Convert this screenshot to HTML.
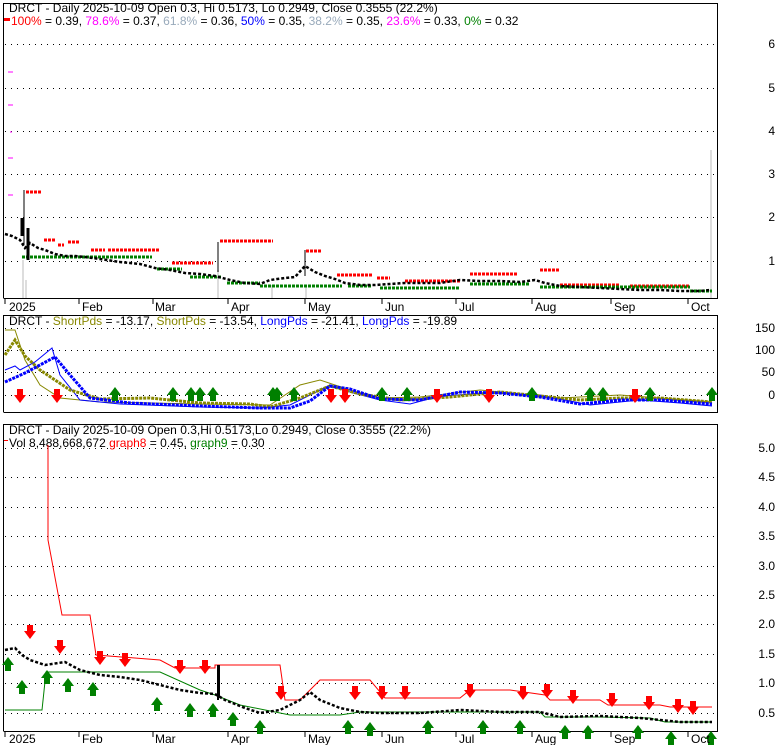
<!DOCTYPE html>
<html><head><meta charset="utf-8"><style>
body{margin:0;background:#fff;}
svg text{font-family:"Liberation Sans",sans-serif;font-size:12px;}
</style></head><body>
<svg width="780" height="745" viewBox="0 0 780 745" xmlns="http://www.w3.org/2000/svg">
<rect width="780" height="745" fill="#fff"/>
<g stroke="#000" stroke-width="1" stroke-dasharray="1 5" fill="none">
<line x1="5" y1="44.5" x2="716" y2="44.5"/><line x1="5" y1="88.5" x2="716" y2="88.5"/>
<line x1="5" y1="131.5" x2="716" y2="131.5"/><line x1="5" y1="174.5" x2="716" y2="174.5"/>
<line x1="5" y1="217.5" x2="716" y2="217.5"/><line x1="5" y1="261.5" x2="716" y2="261.5"/>
</g>
<path d="M23 298V260M26 298V280M218 298V270M272 298V285M306 298V285M711 298V150" stroke="#ddd" stroke-width="2"/>
<path d="M3.5 298V3.5H717.5V298.5H3.5" fill="none" stroke="#000"/>
<g font-size="12" text-anchor="end" fill="#000">
<text x="775" y="48">6</text><text x="775" y="92">5</text><text x="775" y="135">4</text>
<text x="775" y="178">3</text><text x="775" y="221">2</text><text x="775" y="265">1</text>
</g>
<text x="9" y="12">DRCT - Daily 2025-10-09 Open 0.3, Hi 0.5173, Lo 0.2949, Close 0.3555 (22.2%)</text>
<rect x="4" y="18" width="6" height="3" fill="red"/>
<text x="11" y="25"><tspan fill="red">100%</tspan> = 0.39, <tspan fill="#f0f">78.6%</tspan> = 0.37, <tspan fill="#9ab">61.8%</tspan> = 0.36, <tspan fill="#00f">50%</tspan> = 0.35, <tspan fill="#9ab">38.2%</tspan> = 0.35, <tspan fill="#f0f">23.6%</tspan> = 0.33, <tspan fill="green">0%</tspan> = 0.32</text>
<g stroke-width="3" stroke-dasharray="3 1" fill="none">
<path stroke="red" d="M26 192H41M44 240H55M58 245H64M68 242H80M91 250H105M108 250H160M172 263H213M220 241H273M306 251H322M337 275H372M377 278H390M405 281H460M470 274H517M540 270H560M560 285H620M630 286H690"/>
<path stroke="green" d="M22 257H152M157 269H182M190 277H222M227 283H260M260 286H342M348 286H372M380 288H460M470 284H530M540 287H690M690 291H712"/>
</g>
<polyline fill="none" stroke="#000" stroke-width="2.5" stroke-dasharray="3 2" points="5,234 12,236 20,240 25,248 30,243 38,248 45,250 55,254 65,256 75,256 85,257 100,259 120,262 140,264 155,268 170,270 185,273 200,274 215,276 230,280 245,283 260,284 270,280 285,278 295,277 305,266 315,272 325,276 335,279 345,283 360,285 375,285 390,284 405,283 420,283 440,283 460,280 480,281 500,281 520,282 535,280 545,283 560,286 580,287 600,288 620,289 640,290 660,290 680,291 700,291 710,290"/>
<path d="M24 190V245M218 242V272M305 250V276" stroke="#000" fill="none"/>
<path d="M22 218V236M28 228V260" stroke="#000" stroke-width="3"/>
<path d="M8 72H13M8 105H13M8 158H13M8 195H13M10 132H12" stroke="#f0f"/>
<g font-size="12" fill="#000">
<path d="M5 298V304M79 298V304M153 298V304M228 298V304M305 298V304M382 298V304M456 298V304M532 298V304M611 298V304M688 298V304" stroke="#000"/>
<text x="9" y="311">2025</text><text x="82" y="311">Feb</text><text x="155" y="311">Mar</text><text x="231" y="311">Apr</text><text x="308" y="311">May</text><text x="385" y="311">Jun</text><text x="459" y="311">Jul</text><text x="535" y="311">Aug</text><text x="614" y="311">Sep</text><text x="691" y="311">Oct</text>
</g>
<g stroke="#000" stroke-dasharray="1 5" fill="none">
<line x1="5" y1="328.5" x2="716" y2="328.5"/><line x1="5" y1="350.5" x2="716" y2="350.5"/>
<line x1="5" y1="372.5" x2="716" y2="372.5"/><line x1="5" y1="395.5" x2="716" y2="395.5"/>
</g>
<path d="M3.5 412V315.5H717.5V412.5H3.5" fill="none" stroke="#000"/>
<g text-anchor="end"><text x="775" y="332">150</text><text x="775" y="354">100</text><text x="775" y="376">50</text><text x="775" y="399">0</text></g>
<text x="9" y="325">DRCT - <tspan fill="#880">ShortPds</tspan> = -13.17, <tspan fill="#880">ShortPds</tspan> = -13.54, <tspan fill="#00f">LongPds</tspan> = -21.41, <tspan fill="#00f">LongPds</tspan> = -19.89</text>
<polyline fill="none" stroke="#880" points="5,330 15,330 25,360 40,385 60,398 100,402 200,404 270,405 300,385 320,380 350,390 380,398 420,397 480,390 520,394 560,398 620,395 660,398 712,402"/>
<polyline fill="none" stroke="#00f" points="5,370 15,366 20,370 35,362 52,348 60,375 80,400 120,404 200,407 260,408 290,405 310,395 330,385 350,392 380,400 410,404 440,396 490,393 540,395 590,405 640,400 680,403 712,406"/>
<polyline fill="none" stroke="#880" stroke-width="3" stroke-dasharray="3 1" points="5,355 15,340 25,356 40,370 70,390 100,399 150,398 200,403 250,404 270,407 300,398 330,386 360,394 400,400 450,397 500,392 540,396 580,400 620,398 660,398 712,402"/>
<polyline fill="none" stroke="#00f" stroke-width="3" stroke-dasharray="3 1" points="5,382 25,373 55,357 70,375 90,398 130,403 200,406 260,408 290,408 310,401 330,386 350,389 380,399 420,400 460,392 500,393 540,397 580,404 620,400 660,400 712,404"/>
<g fill="green"><path d="M0 0L-6 8H-3V14H3V8H6Z" transform="translate(115,387)"/>
<path d="M0 0L-6 8H-3V14H3V8H6Z" transform="translate(173,387)"/><path d="M0 0L-6 8H-3V14H3V8H6Z" transform="translate(191,387)"/><path d="M0 0L-6 8H-3V14H3V8H6Z" transform="translate(200,387)"/><path d="M0 0L-6 8H-3V14H3V8H6Z" transform="translate(213,387)"/><path d="M0 0L-6 8H-3V14H3V8H6Z" transform="translate(273,387)"/><path d="M0 0L-6 8H-3V14H3V8H6Z" transform="translate(277,387)"/><path d="M0 0L-6 8H-3V14H3V8H6Z" transform="translate(294,387)"/><path d="M0 0L-6 8H-3V14H3V8H6Z" transform="translate(382,387)"/><path d="M0 0L-6 8H-3V14H3V8H6Z" transform="translate(407,387)"/><path d="M0 0L-6 8H-3V14H3V8H6Z" transform="translate(532,387)"/><path d="M0 0L-6 8H-3V14H3V8H6Z" transform="translate(590,387)"/><path d="M0 0L-6 8H-3V14H3V8H6Z" transform="translate(603,387)"/><path d="M0 0L-6 8H-3V14H3V8H6Z" transform="translate(650,387)"/><path d="M0 0L-6 8H-3V14H3V8H6Z" transform="translate(712,387)"/></g>
<g fill="red"><path d="M-3 0H3V6H6L0 14L-6 6H-3Z" transform="translate(20,389)"/><path d="M-3 0H3V6H6L0 14L-6 6H-3Z" transform="translate(57,389)"/><path d="M-3 0H3V6H6L0 14L-6 6H-3Z" transform="translate(331,389)"/><path d="M-3 0H3V6H6L0 14L-6 6H-3Z" transform="translate(345,389)"/><path d="M-3 0H3V6H6L0 14L-6 6H-3Z" transform="translate(437,389)"/><path d="M-3 0H3V6H6L0 14L-6 6H-3Z" transform="translate(489,389)"/><path d="M-3 0H3V6H6L0 14L-6 6H-3Z" transform="translate(635,389)"/></g>
<g stroke="#000" stroke-dasharray="1 5" fill="none">
<line x1="5" y1="448.5" x2="716" y2="448.5"/><line x1="5" y1="477.5" x2="716" y2="477.5"/><line x1="5" y1="507.5" x2="716" y2="507.5"/><line x1="5" y1="536.5" x2="716" y2="536.5"/><line x1="5" y1="566.5" x2="716" y2="566.5"/><line x1="5" y1="595.5" x2="716" y2="595.5"/><line x1="5" y1="624.5" x2="716" y2="624.5"/><line x1="5" y1="654.5" x2="716" y2="654.5"/><line x1="5" y1="683.5" x2="716" y2="683.5"/><line x1="5" y1="713.5" x2="716" y2="713.5"/>
</g>
<path d="M3.5 731V424.5H717.5V731.5H3.5" fill="none" stroke="#000"/>
<g text-anchor="end"><text x="775" y="452">5.0</text><text x="775" y="481">4.5</text><text x="775" y="511">4.0</text><text x="775" y="540">3.5</text><text x="775" y="570">3.0</text><text x="775" y="599">2.5</text><text x="775" y="628">2.0</text><text x="775" y="658">1.5</text><text x="775" y="687">1.0</text><text x="775" y="717">0.5</text></g>
<text x="9" y="434">DRCT - Daily 2025-10-09 Open 0.3,Hi 0.5173,Lo 0.2949, Close 0.3555 (22.2%)</text>
<rect x="4" y="440" width="4" height="1" fill="red"/>
<text x="9" y="447">Vol 8,488,668,672 <tspan fill="red">graph8</tspan> = 0.45, <tspan fill="green">graph9</tspan> = 0.30</text>
<polyline fill="none" stroke="red" points="48,445 48,540 62,615 90,615 96,655 160,660 175,668 215,668 215,665 280,665 285,700 300,700 320,680 370,680 385,698 460,698 470,690 510,690 545,695 550,700 600,700 608,705 660,705 670,707 712,707"/>
<polyline fill="none" stroke="green" points="5,710 42,710 46,672 95,672 160,672 200,690 215,695 240,705 290,715 340,715 360,712 470,712 540,712 545,717 600,717 650,718 665,722 712,722"/>
<polyline fill="none" stroke="#000" stroke-width="2.5" stroke-dasharray="3 2" points="5,650 15,648 22,655 30,660 45,665 65,662 80,670 100,675 120,677 140,680 160,685 180,690 200,693 215,694 225,700 245,708 260,713 280,710 300,700 310,692 320,700 340,708 360,712 380,713 420,713 460,710 500,712 540,712 560,717 600,716 640,718 680,722 712,722"/>
<path d="M218 665V700M219 665V697" stroke="#000" stroke-width="2"/>
<g fill="green"><path d="M0 0L-6 8H-3V14H3V8H6Z" transform="translate(8,657)"/><path d="M0 0L-6 8H-3V14H3V8H6Z" transform="translate(22,680)"/><path d="M0 0L-6 8H-3V14H3V8H6Z" transform="translate(47,670)"/><path d="M0 0L-6 8H-3V14H3V8H6Z" transform="translate(68,678)"/><path d="M0 0L-6 8H-3V14H3V8H6Z" transform="translate(93,682)"/><path d="M0 0L-6 8H-3V14H3V8H6Z" transform="translate(157,697)"/><path d="M0 0L-6 8H-3V14H3V8H6Z" transform="translate(190,703)"/><path d="M0 0L-6 8H-3V14H3V8H6Z" transform="translate(213,703)"/><path d="M0 0L-6 8H-3V14H3V8H6Z" transform="translate(233,712)"/><path d="M0 0L-6 8H-3V14H3V8H6Z" transform="translate(260,720)"/><path d="M0 0L-6 8H-3V14H3V8H6Z" transform="translate(348,720)"/><path d="M0 0L-6 8H-3V14H3V8H6Z" transform="translate(370,722)"/><path d="M0 0L-6 8H-3V14H3V8H6Z" transform="translate(428,720)"/><path d="M0 0L-6 8H-3V14H3V8H6Z" transform="translate(483,720)"/><path d="M0 0L-6 8H-3V14H3V8H6Z" transform="translate(520,720)"/><path d="M0 0L-6 8H-3V14H3V8H6Z" transform="translate(565,725)"/><path d="M0 0L-6 8H-3V14H3V8H6Z" transform="translate(588,725)"/><path d="M0 0L-6 8H-3V14H3V8H6Z" transform="translate(638,725)"/><path d="M0 0L-6 8H-3V14H3V8H6Z" transform="translate(671,731)"/><path d="M0 0L-6 8H-3V14H3V8H6Z" transform="translate(711,731)"/></g>
<g fill="red"><path d="M-3 0H3V6H6L0 14L-6 6H-3Z" transform="translate(30,625)"/><path d="M-3 0H3V6H6L0 14L-6 6H-3Z" transform="translate(60,640)"/><path d="M-3 0H3V6H6L0 14L-6 6H-3Z" transform="translate(100,651)"/><path d="M-3 0H3V6H6L0 14L-6 6H-3Z" transform="translate(125,653)"/><path d="M-3 0H3V6H6L0 14L-6 6H-3Z" transform="translate(180,660)"/><path d="M-3 0H3V6H6L0 14L-6 6H-3Z" transform="translate(205,660)"/><path d="M-3 0H3V6H6L0 14L-6 6H-3Z" transform="translate(281,686)"/><path d="M-3 0H3V6H6L0 14L-6 6H-3Z" transform="translate(355,686)"/><path d="M-3 0H3V6H6L0 14L-6 6H-3Z" transform="translate(382,686)"/><path d="M-3 0H3V6H6L0 14L-6 6H-3Z" transform="translate(405,686)"/><path d="M-3 0H3V6H6L0 14L-6 6H-3Z" transform="translate(470,684)"/><path d="M-3 0H3V6H6L0 14L-6 6H-3Z" transform="translate(523,686)"/><path d="M-3 0H3V6H6L0 14L-6 6H-3Z" transform="translate(547,684)"/><path d="M-3 0H3V6H6L0 14L-6 6H-3Z" transform="translate(573,690)"/><path d="M-3 0H3V6H6L0 14L-6 6H-3Z" transform="translate(612,693)"/><path d="M-3 0H3V6H6L0 14L-6 6H-3Z" transform="translate(649,696)"/><path d="M-3 0H3V6H6L0 14L-6 6H-3Z" transform="translate(678,699)"/><path d="M-3 0H3V6H6L0 14L-6 6H-3Z" transform="translate(693,701)"/></g>
<path d="M5 731V737M79 731V737M153 731V737M228 731V737M305 731V737M382 731V737M456 731V737M532 731V737M611 731V737M688 731V737" stroke="#000"/>
<text x="9" y="743">2025</text><text x="82" y="743">Feb</text><text x="155" y="743">Mar</text><text x="231" y="743">Apr</text><text x="308" y="743">May</text><text x="385" y="743">Jun</text><text x="459" y="743">Jul</text><text x="535" y="743">Aug</text><text x="614" y="743">Sep</text><text x="691" y="743">Oct</text>
</svg>
</body></html>
